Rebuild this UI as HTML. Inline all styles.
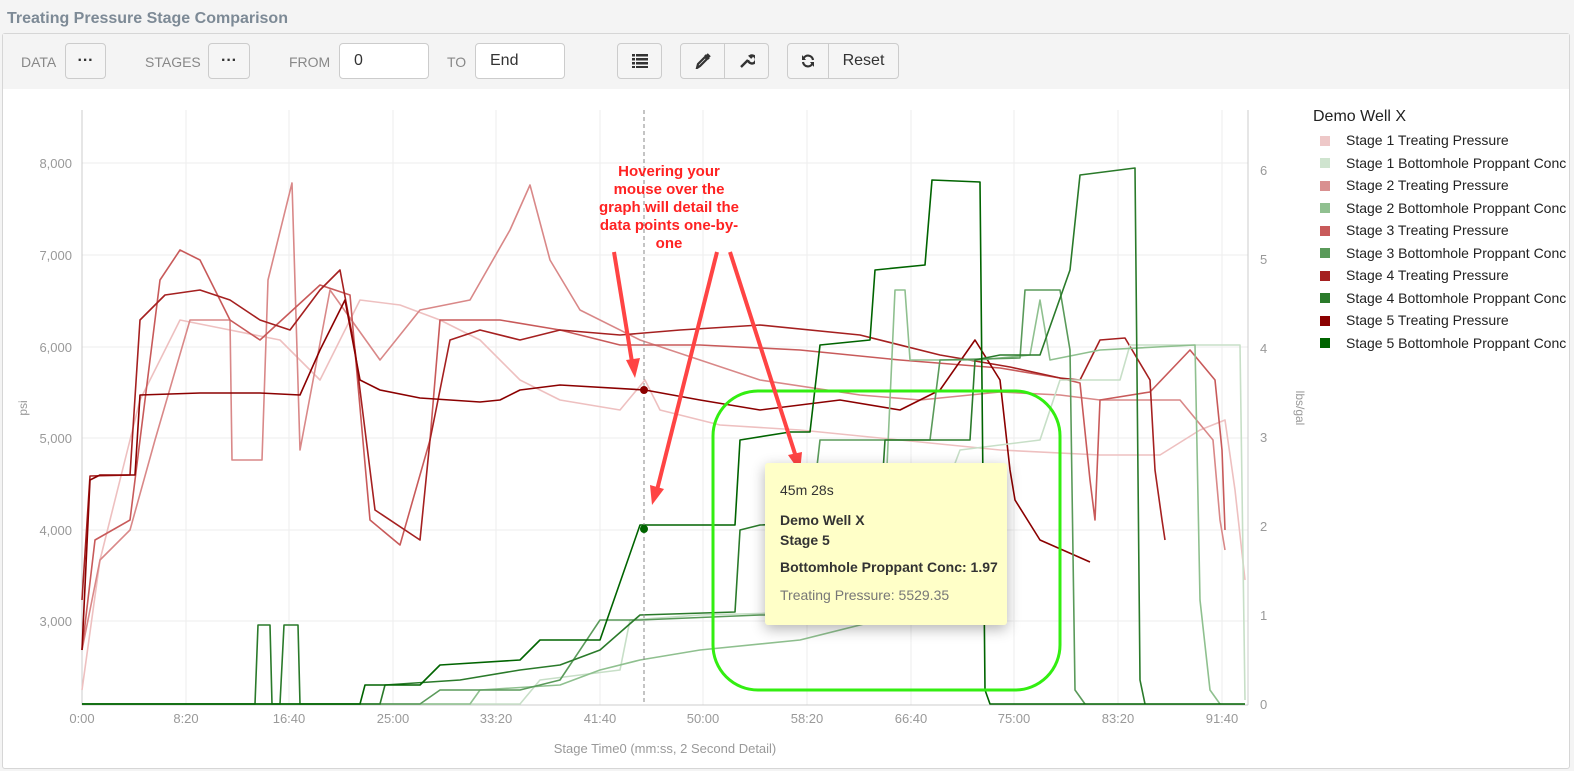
<!DOCTYPE html>
<html><head><meta charset="utf-8"><style>
body{margin:0;width:1574px;height:771px;background:#f4f4f4;font-family:"Liberation Sans",sans-serif;position:relative;overflow:hidden}
.title{position:absolute;left:7px;top:10px;font-size:16px;font-weight:bold;color:#7d8a96}
.panel{position:absolute;left:2px;top:33px;width:1566px;height:734px;border:1px solid #d6d6d6;background:#fff;border-radius:3px}
.bar{position:absolute;left:0;top:0;width:1566px;height:55px;background:#f4f4f4}
.lbl{position:absolute;top:20px;font-size:14px;color:#888}
.btn{position:absolute;top:9px;height:36px;border:1px solid #ccc;border-radius:4px;background:#f5f5f5;box-sizing:border-box;font-size:16px;color:#333;display:flex;align-items:center;justify-content:center}
.inp{position:absolute;top:9px;height:36px;border:1px solid #ccc;border-radius:4px;background:#fff;box-sizing:border-box;font-size:16px;color:#333;padding-left:14px;line-height:34px}
svg{position:absolute;left:0;top:0}
.tt{position:absolute;left:765px;top:463px;width:242px;height:162px;background:#ffffc8;box-shadow:0 4px 14px rgba(0,0,0,.3);border-radius:3px;font-size:14px;color:#333}
.leg{position:absolute;left:1313px;font-size:14px;color:#222}
.sw{position:absolute;left:1320px;width:10px;height:10px}
</style></head><body>
<div class="title">Treating Pressure Stage Comparison</div>
<div class="panel"><div class="bar">
<span class="lbl" style="left:18px">DATA</span>
<div class="btn" style="left:62px;width:41px;font-weight:bold">···</div>
<span class="lbl" style="left:142px">STAGES</span>
<div class="btn" style="left:205px;width:42px;font-weight:bold">···</div>
<span class="lbl" style="left:286px">FROM</span>
<div class="inp" style="left:336px;width:90px">0</div>
<span class="lbl" style="left:444px">TO</span>
<div class="inp" style="left:472px;width:90px">End</div>
<div class="btn" style="left:614px;width:45px"><svg style="position:static" width="16" height="14"><rect x="0" y="0" width="3" height="2.5" fill="#333"/><rect x="4" y="0" width="12" height="2.5" fill="#333"/><rect x="0" y="4" width="3" height="2.5" fill="#333"/><rect x="4" y="4" width="12" height="2.5" fill="#333"/><rect x="0" y="8" width="3" height="2.5" fill="#333"/><rect x="4" y="8" width="12" height="2.5" fill="#333"/><rect x="0" y="12" width="3" height="2" fill="#333"/><rect x="4" y="12" width="12" height="2" fill="#333"/></svg></div>
<div class="btn" style="left:677px;width:45px;border-radius:4px 0 0 4px"><svg style="position:static" width="16" height="16"><path d="M2 15 L3 11 L10 4 L12 6 L5 13 Z M10 2 L14 6 M12 1 L15 4" stroke="#333" stroke-width="2.2" fill="none"/></svg></div>
<div class="btn" style="left:721px;width:45px;border-radius:0 4px 4px 0"><svg style="position:static" width="16" height="16"><path d="M2 14 L9 7 M9 7 A4 4 0 1 0 11 3 L13 5" stroke="#333" stroke-width="2.4" fill="none"/></svg></div>
<div class="btn" style="left:784px;width:42px;border-radius:4px 0 0 4px"><svg style="position:static" width="14" height="14"><path d="M12 6 A5 5 0 0 0 2.5 4.5 M2 8 A5 5 0 0 0 11.5 9.5" stroke="#333" stroke-width="2.2" fill="none"/><path d="M1 1 L1 6 L5 6 Z M13 13 L13 8 L9 8 Z" fill="#333"/></svg></div>
<div class="btn" style="left:825px;width:71px;border-radius:0 4px 4px 0">Reset</div>
</div></div>

<svg width="1574" height="771" font-family="Liberation Sans, sans-serif">
<g stroke="#eee" stroke-width="1">
<line x1="82" y1="163" x2="1248" y2="163"/><line x1="82" y1="255" x2="1248" y2="255"/><line x1="82" y1="347" x2="1248" y2="347"/><line x1="82" y1="438" x2="1248" y2="438"/><line x1="82" y1="530" x2="1248" y2="530"/><line x1="82" y1="621" x2="1248" y2="621"/>
<line x1="186" y1="110" x2="186" y2="705"/><line x1="289" y1="110" x2="289" y2="705"/><line x1="393" y1="110" x2="393" y2="705"/><line x1="496" y1="110" x2="496" y2="705"/><line x1="600" y1="110" x2="600" y2="705"/><line x1="703" y1="110" x2="703" y2="705"/><line x1="807" y1="110" x2="807" y2="705"/><line x1="911" y1="110" x2="911" y2="705"/><line x1="1014" y1="110" x2="1014" y2="705"/><line x1="1118" y1="110" x2="1118" y2="705"/><line x1="1222" y1="110" x2="1222" y2="705"/>
</g>
<g stroke="#ccc"><line x1="82" y1="110" x2="82" y2="705"/><line x1="1248" y1="110" x2="1248" y2="705"/><line x1="82" y1="705" x2="1248" y2="705"/></g>
<g fill="#999" font-size="13" text-anchor="end">
<text x="72" y="168">8,000</text><text x="72" y="260">7,000</text><text x="72" y="352">6,000</text><text x="72" y="443">5,000</text><text x="72" y="535">4,000</text><text x="72" y="626">3,000</text></g>
<g fill="#999" font-size="13"><text x="1260" y="175">6</text><text x="1260" y="264">5</text><text x="1260" y="353">4</text><text x="1260" y="442">3</text><text x="1260" y="531">2</text><text x="1260" y="620">1</text><text x="1260" y="709">0</text></g>
<g fill="#999" font-size="13" text-anchor="middle">
<text x="82" y="723">0:00</text><text x="186" y="723">8:20</text><text x="289" y="723">16:40</text><text x="393" y="723">25:00</text><text x="496" y="723">33:20</text><text x="600" y="723">41:40</text><text x="703" y="723">50:00</text><text x="807" y="723">58:20</text><text x="911" y="723">66:40</text><text x="1014" y="723">75:00</text><text x="1118" y="723">83:20</text><text x="1222" y="723">91:40</text>
<text x="665" y="753">Stage Time0 (mm:ss, 2 Second Detail)</text></g>
<text x="27" y="408" fill="#999" font-size="12" transform="rotate(-90 27 408)" text-anchor="middle">psi</text>
<text x="1296" y="408" fill="#999" font-size="12" transform="rotate(90 1296 408)" text-anchor="middle">lbs/gal</text>
<g fill="none" stroke-width="1.6" stroke-linejoin="round">
<polyline stroke="#eec0c0" points="82,690 100,560 140,400 180,320 230,330 280,340 320,380 360,300 400,305 440,320 480,340 520,380 560,400 620,410 645,380 660,410 720,425 800,430 900,440 1000,450 1100,455 1160,455 1200,430 1225,420 1235,490 1245,580"/>
<polyline stroke="#d98888" points="82,650 100,560 130,530 155,440 190,320 230,320 232,460 262,460 268,280 292,183 300,450 330,290 380,360 420,310 470,300 510,230 530,185 550,260 580,310 640,340 700,360 760,380 860,395 920,400 1000,392 1060,395 1100,400 1180,400 1213,440 1220,520 1225,550"/>
<polyline stroke="#c85a5a" points="82,650 95,540 130,520 160,280 180,250 200,260 230,320 260,340 320,285 350,295 370,520 400,545 430,440 440,320 500,320 560,330 620,345 700,345 800,350 900,360 1000,368 1060,378 1080,383 1090,480 1095,520 1100,400 1150,392 1190,350 1215,380 1222,450 1225,530"/>
<polyline stroke="#a52020" points="82,600 90,476 130,475 140,320 165,295 200,290 230,300 260,320 290,330 320,290 340,270 355,350 375,510 420,540 430,440 450,340 480,330 520,340 560,330 620,335 680,330 760,325 860,335 940,355 1010,367 1060,378 1080,380 1100,340 1125,338 1150,380 1155,470 1162,520 1165,540"/>
<polyline stroke="#8b0000" points="82,650 90,480 100,475 135,475 140,395 200,393 260,393 300,395 320,350 345,300 360,380 380,390 420,398 480,402 500,400 520,390 560,385 645,390 700,400 760,410 840,400 900,410 940,390 975,340 1000,380 1010,470 1015,500 1040,540 1090,562"/>
<polyline stroke="#c7dfc7" points="82,704 520,704 540,680 620,670 630,620 700,615 900,610 960,450 1040,440 1060,380 1120,380 1130,345 1240,345 1245,700"/>
<polyline stroke="#8fc08f" points="82,704 470,704 480,690 560,685 600,670 640,660 700,650 800,640 880,620 895,290 905,290 910,360 980,360 1030,355 1040,300 1050,360 1100,350 1195,345 1200,600 1210,690 1220,704"/>
<polyline stroke="#5a9a5a" points="82,704 420,704 440,690 520,690 560,680 600,620 640,620 760,615 800,615 820,440 930,440 940,360 1020,358 1025,290 1060,290 1070,350 1075,690 1085,704"/>
<polyline stroke="#2a7a2a" points="82,704 255,704 258,625 270,625 272,704 280,704 284,625 298,625 300,704 380,704 385,685 460,680 520,670 560,665 600,650 640,615 735,612 740,530 760,525 880,520 885,440 970,440 975,360 1000,355 1040,355 1070,270 1080,175 1135,168 1140,680 1145,704"/>
<polyline stroke="#006400" points="82,704 360,704 365,685 420,685 440,665 520,660 540,640 600,640 640,525 700,525 735,525 740,440 790,432 810,432 820,345 870,340 875,270 925,265 932,180 980,182 985,690 990,704 1245,704"/>
</g>
<line x1="644" y1="110" x2="644" y2="705" stroke="#888" stroke-dasharray="4,3"/>
<circle cx="644" cy="390" r="4" fill="#8b0000"/><circle cx="644" cy="529" r="4" fill="#006400"/>
<rect x="713" y="391" width="347" height="299" rx="45" fill="none" stroke="#33ee11" stroke-width="3"/>
<g stroke="#ff4444" stroke-width="4" fill="#ff4444">
<line x1="614" y1="252" x2="632" y2="362"/><polygon points="626,360 640,358 635,378" stroke="none"/>
<line x1="717" y1="252" x2="657" y2="490"/><polygon points="650,485 664,489 652,505" stroke="none"/>
<line x1="730" y1="252" x2="796" y2="457"/><polygon points="788,455 802,452 800,472" stroke="none"/>
</g>
<g fill="#ff2222" font-size="15" font-weight="bold" text-anchor="middle">
<text x="669" y="176">Hovering your</text><text x="669" y="194">mouse over the</text><text x="669" y="212">graph will detail the</text><text x="669" y="230">data points one-by-</text><text x="669" y="248">one</text></g>
</svg>
<div class="tt">
<div style="position:absolute;left:15px;top:19px">45m 28s</div>
<div style="position:absolute;left:15px;top:47px;font-weight:bold;line-height:20px">Demo Well X<br>Stage 5</div>
<div style="position:absolute;left:15px;top:96px;font-weight:bold">Bottomhole Proppant Conc: 1.97</div>
<div style="position:absolute;left:15px;top:124px;color:#777">Treating Pressure: 5529.35</div>
</div>
<div class="leg" style="top:108px;font-size:16px">Demo Well X</div>
<div class="sw" style="top:136px;background:#eec8c8"></div><div class="leg" style="left:1346px;top:132px">Stage 1 Treating Pressure</div>
<div class="sw" style="top:158px;background:#cfe4cf"></div><div class="leg" style="left:1346px;top:155px">Stage 1 Bottomhole Proppant Conc</div>
<div class="sw" style="top:181px;background:#d99090"></div><div class="leg" style="left:1346px;top:177px">Stage 2 Treating Pressure</div>
<div class="sw" style="top:203px;background:#90c090"></div><div class="leg" style="left:1346px;top:200px">Stage 2 Bottomhole Proppant Conc</div>
<div class="sw" style="top:226px;background:#c85a5a"></div><div class="leg" style="left:1346px;top:222px">Stage 3 Treating Pressure</div>
<div class="sw" style="top:248px;background:#5a9a5a"></div><div class="leg" style="left:1346px;top:245px">Stage 3 Bottomhole Proppant Conc</div>
<div class="sw" style="top:271px;background:#a52020"></div><div class="leg" style="left:1346px;top:267px">Stage 4 Treating Pressure</div>
<div class="sw" style="top:293px;background:#2a7a2a"></div><div class="leg" style="left:1346px;top:290px">Stage 4 Bottomhole Proppant Conc</div>
<div class="sw" style="top:316px;background:#8b0000"></div><div class="leg" style="left:1346px;top:312px">Stage 5 Treating Pressure</div>
<div class="sw" style="top:338px;background:#006400"></div><div class="leg" style="left:1346px;top:335px">Stage 5 Bottomhole Proppant Conc</div>
</body></html>
